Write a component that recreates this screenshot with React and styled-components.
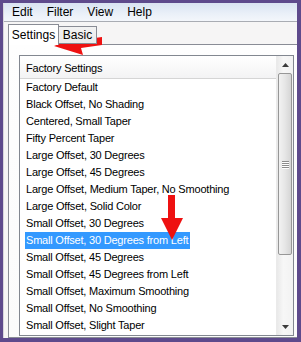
import React from "react";
import styled, { createGlobalStyle } from "styled-components";

const Global = createGlobalStyle`
  html, body { margin: 0; padding: 0; background: #fff; }
  body { font-family: "Liberation Sans", Arial, sans-serif; }
`;

const Frame = styled.div`
  position: relative;
  width: 301px;
  height: 342px;
  box-sizing: border-box;
  border-style: solid;
  border-color: #5e4a8c;
  border-width: 3px 4px 4px 3px;
  overflow: hidden;
`;

const Window = styled.div`
  height: 100%;
  display: flex;
  flex-direction: column;
  background: #f6f5f5;
  border-left: 1px solid #d8d6dc;
  overflow: hidden;
`;

const MenuBar = styled.div`
  height: 18px;
  flex: none;
  display: flex;
  align-items: center;
  gap: 14px;
  padding-left: 8px;
  background: linear-gradient(#d9e3f2, #eaf0f8 60%, #f3f6fb);
  border-bottom: 1px solid #a9acb3;
  font-size: 12px;
  color: #000;
`;

const MenuItem = styled.span`
  line-height: 18px;
`;

const TabStrip = styled.div`
  height: 22px;
  flex: none;
  display: flex;
  align-items: flex-end;
  padding-left: 4px;
  position: relative;
  z-index: 1;
`;

const Tab = styled.div`
  box-sizing: border-box;
  height: ${(p) => (p.$active ? 21 : 18)}px;
  padding: 0 ${(p) => (p.$active ? 5 : 4)}px;
  margin-bottom: ${(p) => (p.$active ? -1 : 0)}px;
  display: flex;
  align-items: center;
  justify-content: center;
  font-size: 12px;
  color: #000;
  border: 1px solid #898c95;
  border-bottom: ${(p) => (p.$active ? "none" : "1px solid #898c95")};
  border-left: ${(p) => (p.$first ? "1px solid #898c95" : "none")};
  background: ${(p) => (p.$active ? "#fff" : "linear-gradient(#f2f2f2, #ebebeb)")};
  width: ${(p) => p.$w}px;
`;

const Panel = styled.div`
  flex: 1;
  min-height: 0;
  margin-left: 4px;
  margin-right: -8px;
  border: 1px solid #898c95;
  background: linear-gradient(#fefefe, #fbfbfb);
  padding: 10px 0 0 10px;
`;

const ListBox = styled.div`
  width: 275px;
  height: 281px;
  box-sizing: border-box;
  border: 1px solid #828790;
  background: #fff;
  display: flex;
  overflow: hidden;
`;

const ListBody = styled.div`
  flex: 1;
  min-width: 0;
  display: flex;
  flex-direction: column;
`;

const Header = styled.div`
  height: 23px;
  flex: none;
  box-sizing: border-box;
  border-bottom: 1px solid #d5d5d5;
  background: linear-gradient(#ffffff, #f3f3f4);
  padding: 1px 0 0 6px;
  display: flex;
  align-items: center;
  font-size: 11px;
  letter-spacing: -0.2px;
  color: #000;
`;

const Row = styled.div`
  height: 17px;
  flex: none;
  display: flex;
  align-items: center;
  padding-left: 5px;
`;

const RowText = styled.span`
  font-size: 11px;
  letter-spacing: -0.2px;
  line-height: 17px;
  padding: 0 2px 0 1px;
  white-space: nowrap;
  color: ${(p) => (p.$sel ? "#fff" : "#000")};
  background: ${(p) => (p.$sel ? "#3399ff" : "transparent")};
`;

const ScrollBar = styled.div`
  width: 16px;
  flex: none;
  display: flex;
  flex-direction: column;
  background: linear-gradient(90deg, #e9e9e9, #f7f7f7 40%, #f2f2f2);
  border-left: 1px solid #eaeaea;
`;

const ArrowBtn = styled.div`
  height: 17px;
  flex: none;
  display: flex;
  align-items: center;
  justify-content: center;
`;

const Spacer = styled.div`
  flex: 1;
`;

const Thumb = styled.div`
  height: 182px;
  flex: none;
  margin: 0 1px;
  box-sizing: border-box;
  border: 1px solid #979797;
  border-radius: 2px;
  background: linear-gradient(90deg, #f2f2f2, #e6e6e6 50%, #d5d5d5);
  display: flex;
  align-items: center;
  justify-content: center;
`;

const Grip = styled.div`
  width: 7px;
  display: flex;
  flex-direction: column;
  gap: 1px;
  & > span {
    display: block;
    height: 1px;
    background: #8d8d8d;
    box-shadow: 0 1px 0 #fff;
  }
`;

const Overlay = styled.svg`
  position: absolute;
  left: -3px;
  top: -3px;
  width: 301px;
  height: 342px;
  pointer-events: none;
`;

const items = [
  "Factory Default",
  "Black Offset, No Shading",
  "Centered, Small Taper",
  "Fifty Percent Taper",
  "Large Offset, 30 Degrees",
  "Large Offset, 45 Degrees",
  "Large Offset, Medium Taper, No Smoothing",
  "Large Offset, Solid Color",
  "Small Offset, 30 Degrees",
  "Small Offset, 30 Degrees from Left",
  "Small Offset, 45 Degrees",
  "Small Offset, 45 Degrees from Left",
  "Small Offset, Maximum Smoothing",
  "Small Offset, No Smoothing",
  "Small Offset, Slight Taper",
];

export default function App() {
  return (
    <>
      <Global />
      <Frame>
        <Window>
          <MenuBar>
            <MenuItem>Edit</MenuItem>
            <MenuItem>Filter</MenuItem>
            <MenuItem>View</MenuItem>
            <MenuItem>Help</MenuItem>
          </MenuBar>
          <TabStrip>
            <Tab $active $first $w={51}>Settings</Tab>
            <Tab $w={38}>Basic</Tab>
          </TabStrip>
          <Panel>
            <ListBox>
              <ListBody>
                <Header>Factory Settings</Header>
                {items.map((t, i) => (
                  <Row key={t}>
                    <RowText $sel={i === 9}>{t}</RowText>
                  </Row>
                ))}
              </ListBody>
              <ScrollBar>
                <ArrowBtn>
                  <svg width="7" height="4" viewBox="0 0 7 4">
                    <path d="M0 4 L3.5 0 L7 4 Z" fill="#3c3c3c" />
                  </svg>
                </ArrowBtn>
                <Thumb>
                  <Grip>
                    <span />
                    <span />
                    <span />
                    <span />
                  </Grip>
                </Thumb>
                <Spacer />
                <ArrowBtn>
                  <svg width="7" height="4" viewBox="0 0 7 4">
                    <path d="M0 0 L7 0 L3.5 4 Z" fill="#3c3c3c" />
                  </svg>
                </ArrowBtn>
              </ScrollBar>
            </ListBox>
          </Panel>
        </Window>
        <Overlay viewBox="0 0 301 342">
          <polygon
            points="54,46 79,36 80,40 102,37 102,45 81,48 83,55"
            fill="#ee1111"
          />
          <polygon
            points="168,195 175,195 175,218 183,218 172,240 161,218 168,218"
            fill="#ee1111"
          />
        </Overlay>
      </Frame>
    </>
  );
}
